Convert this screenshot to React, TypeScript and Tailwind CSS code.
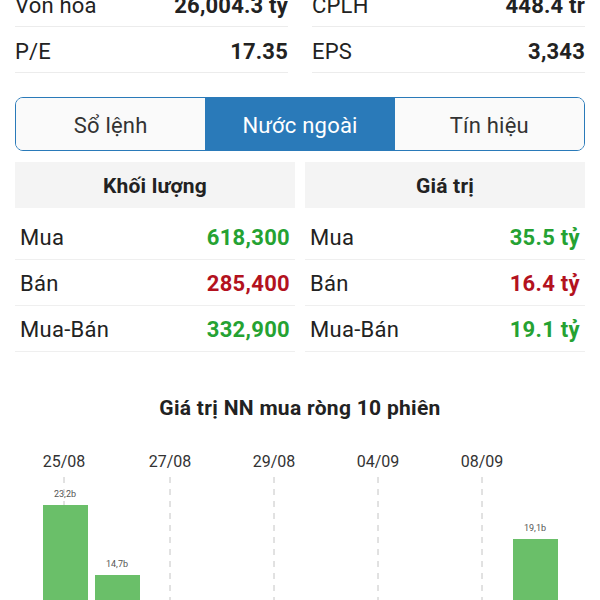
import React from "react";

const green = "text-[#25a232]";
const red = "text-[#b3121e]";

function InfoRow({ label, value }: { label: string; value: string }) {
  return (
    <div className="flex h-[46px] items-center justify-between border-b border-[#ececec] pt-[4px] text-[22px] leading-none tracking-[0.2px] text-[#222]">
      <span>{label}</span>
      <span className="font-bold">{value}</span>
    </div>
  );
}

function DataRow({ label, value, color }: { label: string; value: string; color: string }) {
  return (
    <div className="flex h-[46px] items-center justify-between border-b border-[#efefef] px-[5px] pt-[2px] text-[22px] leading-none tracking-[0.3px] text-[#222]">
      <span>{label}</span>
      <span className={`font-bold ${color}`}>{value}</span>
    </div>
  );
}

const dates = [
  { label: "25/08", x: 64 },
  { label: "27/08", x: 170 },
  { label: "29/08", x: 274 },
  { label: "04/09", x: 378 },
  { label: "08/09", x: 482 },
];

const bars = [
  { x: 43, top: 505, label: "23,2b" },
  { x: 95, top: 575, label: "14,7b" },
  { x: 513, top: 539, label: "19,1b" },
];

function Chart() {
  const oy = 431;
  return (
    <svg width="600" height="200" viewBox={`0 ${oy} 600 200`} className="block">
      {dates.map((d) => (
        <g key={d.label}>
          <text
            x={d.x}
            y={467}
            textAnchor="middle"
            fontSize="16"
            fill="#333"
            fontFamily="Roboto, sans-serif"
          >
            {d.label}
          </text>
          <line
            x1={d.x}
            x2={d.x}
            y1={477}
            y2={640}
            stroke="#c4c4c4"
            strokeWidth="1"
            strokeDasharray="6 6"
          />
        </g>
      ))}
      {bars.map((b) => (
        <g key={b.label}>
          <text
            x={b.x + 22}
            y={b.top - 8}
            textAnchor="middle"
            fontSize="9"
            fill="#555"
            fontFamily="Roboto, sans-serif"
          >
            {b.label}
          </text>
          <rect x={b.x} y={b.top} width={45} height={640 - b.top} fill="#6abf69" />
        </g>
      ))}
    </svg>
  );
}

export default function App() {
  return (
    <div className="h-[600px] w-[600px] overflow-hidden bg-white font-['Roboto',sans-serif]">
      <div className="-mt-[19px] grid grid-cols-2 gap-x-[24px] px-[15px]">
        <div>
          <InfoRow label="Vốn hóa" value="26,004.3 tỷ" />
          <InfoRow label="P/E" value="17.35" />
        </div>
        <div>
          <InfoRow label="CPLH" value="448.4 tr" />
          <InfoRow label="EPS" value="3,343" />
        </div>
      </div>

      <div className="mx-[15px] mt-[24px] flex h-[54px] overflow-hidden rounded-[8px] border-[1.5px] border-[#2a7ab9] text-[22px] tracking-[0.2px]">
        <div className="flex flex-1 items-center justify-center bg-[#fafafa] pt-[3px] text-[#333]">Sổ lệnh</div>
        <div className="flex flex-1 items-center justify-center bg-[#2a7ab9] pt-[3px] text-white">Nước ngoài</div>
        <div className="flex flex-1 items-center justify-center bg-[#fafafa] pt-[3px] text-[#333]">Tín hiệu</div>
      </div>

      <div className="mt-[11px] grid grid-cols-2 gap-x-[10px] px-[15px]">
        <div>
          <div className="flex h-[46px] items-center justify-center bg-[#f4f4f4] pt-[3px] text-[21px] font-bold tracking-[0.2px] text-[#222]">
            Khối lượng
          </div>
          <div className="mt-[6px]">
            <DataRow label="Mua" value="618,300" color={green} />
            <DataRow label="Bán" value="285,400" color={red} />
            <DataRow label="Mua-Bán" value="332,900" color={green} />
          </div>
        </div>
        <div>
          <div className="flex h-[46px] items-center justify-center bg-[#f4f4f4] pt-[3px] text-[21px] font-bold tracking-[0.2px] text-[#222]">
            Giá trị
          </div>
          <div className="mt-[6px]">
            <DataRow label="Mua" value="35.5 tỷ" color={green} />
            <DataRow label="Bán" value="16.4 tỷ" color={red} />
            <DataRow label="Mua-Bán" value="19.1 tỷ" color={green} />
          </div>
        </div>
      </div>

      <div className="mt-[46px] text-center text-[21px] font-bold leading-none tracking-[0.3px] text-[#222]">
        Giá trị NN mua ròng 10 phiên
      </div>
      <div className="mt-[12px]">
        <Chart />
      </div>
    </div>
  );
}
